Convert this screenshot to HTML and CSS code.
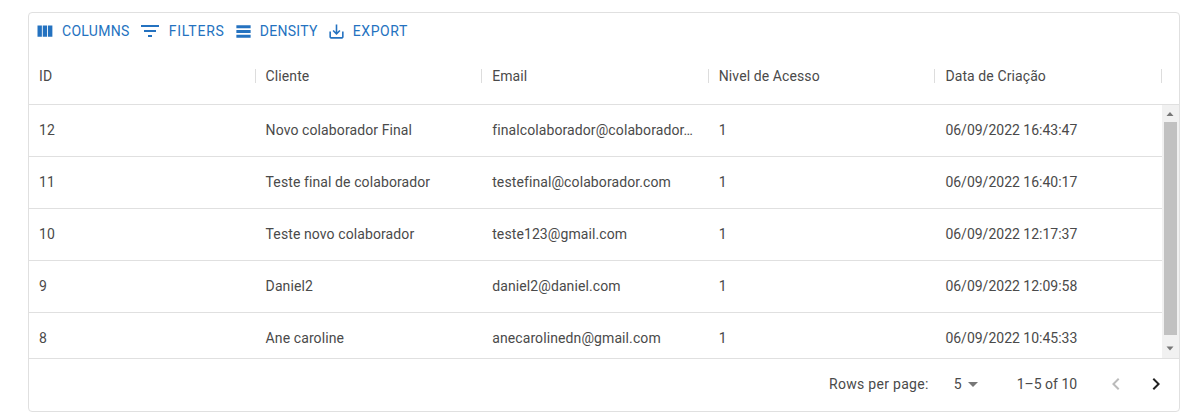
FILE: index.html
```html
<!DOCTYPE html>
<html lang="en">
<head>
    <meta charset="UTF-8">
    <title>Colaboradores</title>
    <link rel="stylesheet" href="styles.css">
</head>
<body>

    <div class="grid">
        <div class="toolbar">
            <button class="tool-btn tool-columns">
                <svg class="tool-icon" viewBox="0 0 24 24"><path d="M10 18h5V5h-5v13zm-6 0h5V5H4v13zM16 5v13h5V5h-5z"/></svg>
                Columns
            </button>
            <button class="tool-btn tool-filters">
                <svg class="tool-icon" viewBox="0 0 24 24"><path d="M10 18h4v-2h-4v2zM3 6v2h18V6H3zm3 7h12v-2H6v2z"/></svg>
                Filters
            </button>
            <button class="tool-btn tool-density">
                <svg class="tool-icon" viewBox="0 0 24 24"><path d="M21 8H3V4h18v4zm0 2H3v4h18v-4zm0 6H3v4h18v-4z"/></svg>
                Density
            </button>
            <button class="tool-btn tool-export">
                <svg class="tool-icon" viewBox="0 0 24 24"><path d="M19 12v7H5v-7H3v7c0 1.1.9 2 2 2h14c1.1 0 2-.9 2-2v-7h-2zm-6 .67l2.59-2.58L17 11.5l-5 5-5-5 1.41-1.41L11 12.67V3h2v9.67z"/></svg>
                Export
            </button>
        </div>

        <div class="head row-cols">
            <div class="head-cell">ID</div>
            <div class="head-cell">Cliente</div>
            <div class="head-cell">Email</div>
            <div class="head-cell">Nivel de Acesso</div>
            <div class="head-cell">Data de Criação</div>
        </div>

        <div class="body-wrap">
            <div class="rows">
                <div class="row row-cols">
                    <div class="cell">12</div>
                    <div class="cell">Novo colaborador Final</div>
                    <div class="cell">finalcolaborador@colaborador…</div>
                    <div class="cell">1</div>
                    <div class="cell cell-date">06/09/2022 16:43:47</div>
                </div>
                <div class="row row-cols">
                    <div class="cell">11</div>
                    <div class="cell">Teste final de colaborador</div>
                    <div class="cell">testefinal@colaborador.com</div>
                    <div class="cell">1</div>
                    <div class="cell cell-date">06/09/2022 16:40:17</div>
                </div>
                <div class="row row-cols">
                    <div class="cell">10</div>
                    <div class="cell">Teste novo colaborador</div>
                    <div class="cell">teste123@gmail.com</div>
                    <div class="cell">1</div>
                    <div class="cell cell-date">06/09/2022 12:17:37</div>
                </div>
                <div class="row row-cols">
                    <div class="cell">9</div>
                    <div class="cell">Daniel2</div>
                    <div class="cell">daniel2@daniel.com</div>
                    <div class="cell">1</div>
                    <div class="cell cell-date">06/09/2022 12:09:58</div>
                </div>
                <div class="row row-cols">
                    <div class="cell">8</div>
                    <div class="cell">Ane caroline</div>
                    <div class="cell">anecarolinedn@gmail.com</div>
                    <div class="cell">1</div>
                    <div class="cell cell-date">06/09/2022 10:45:33</div>
                </div>
            </div>
            <div class="scrollbar">
                <svg class="scroll-arrow" viewBox="0 0 17 17"><path d="M8 7l3.5 4h-7z"/></svg>
                <div class="scroll-thumb"></div>
                <svg class="scroll-arrow" viewBox="0 0 17 17"><path d="M8 9.5l-3.5-4h7z"/></svg>
            </div>
        </div>

        <div class="footer">
            <span class="rows-label">Rows per page:</span>
            <span class="rows-select">5
                <svg class="select-icon" viewBox="0 0 24 24"><path d="M7 10l5 5 5-5z"/></svg>
            </span>
            <span class="page-range">1–5 of 10</span>
            <svg class="page-icon page-prev" viewBox="0 0 24 24"><path d="M15.41 7.41L14 6l-6 6 6 6 1.41-1.41L10.83 12z"/></svg>
            <svg class="page-icon page-next" viewBox="0 0 24 24"><path d="M10 6L8.59 7.41 13.17 12l-4.58 4.59L10 18l6-6z"/></svg>
        </div>
    </div>

</body>
</html>
```

FILE: styles.css
```css
* {
    margin: 0;
    padding: 0;
    box-sizing: border-box;
}

body {
    background-color: #fff;
    font-family: Roboto, "Liberation Sans", sans-serif;
    font-size: 14px;
    color: #4a4a4a;
    letter-spacing: 0.1px;
    padding: 12px 23px 7px 28px;
}

.grid {
    height: 400px;
    border: 1px solid #e0e0e0;
    border-radius: 4px;
    display: flex;
    flex-direction: column;
}

.toolbar {
    height: 38px;
    padding: 0 0 2px 5px;
    display: flex;
    align-items: center;
}

.tool-btn {
    display: flex;
    align-items: center;
    background: none;
    border: none;
    color: #2472c0;
    font-family: inherit;
    font-size: 14px;
    letter-spacing: 0.3px;
    text-transform: uppercase;
    height: 30px;
}

.tool-icon {
    fill: #2472c0;
    margin-right: 7px;
}

.tool-columns .tool-icon {
    width: 21px;
    height: 21px;
}

.tool-filters {
    margin-left: 8px;
    letter-spacing: 0.8px;
}

.tool-filters .tool-icon {
    width: 24px;
    height: 24px;
}

.tool-density {
    margin-left: 9px;
}

.tool-density .tool-icon {
    width: 19px;
    height: 19px;
}

.tool-export {
    margin-left: 9px;
    letter-spacing: 0.6px;
}

.tool-export .tool-icon {
    width: 19px;
    height: 19px;
}

.row-cols {
    display: grid;
    grid-template-columns: repeat(5, 226.6px);
}

.head {
    height: 54px;
    padding-bottom: 3px;
    border-bottom: 1px solid #e0e0e0;
}

.head-cell {
    display: flex;
    align-items: center;
    padding: 0 10px;
    position: relative;
}

.head-cell::after {
    content: "";
    position: absolute;
    right: 0;
    top: 18px;
    width: 1px;
    height: 14px;
    background-color: #ddd;
}

.body-wrap {
    height: 254px;
    display: flex;
    border-bottom: 1px solid #e0e0e0;
}

.rows {
    flex: 1;
    overflow: hidden;
}

.row {
    height: 52px;
    border-bottom: 1px solid #e0e0e0;
}

.cell {
    padding: 0 10px;
    line-height: 50px;
    white-space: nowrap;
}

.cell-date {
    letter-spacing: 0;
}

.scrollbar {
    width: 17px;
    background-color: #f1f1f1;
    display: flex;
    flex-direction: column;
    flex-shrink: 0;
}

.scroll-arrow {
    width: 17px;
    height: 17px;
    fill: #777;
    flex-shrink: 0;
}

.scroll-thumb {
    flex: 1;
    margin: 0 2px 6px 2px;
    background-color: #c1c1c1;
}

.footer {
    flex: 1;
    display: flex;
    align-items: center;
    padding-bottom: 2px;
}

.rows-label {
    margin-left: 800px;
    letter-spacing: 0.3px;
}

.rows-select {
    display: flex;
    align-items: center;
    margin-left: 25px;
}

.select-icon {
    width: 24px;
    height: 24px;
    fill: #777;
    margin-left: -1px;
}

.page-range {
    margin-left: 32px;
    letter-spacing: 0;
}

.page-icon {
    width: 24px;
    height: 24px;
}

.page-prev {
    fill: #bbb;
    margin-left: 27px;
}

.page-next {
    fill: #222;
    margin-left: 16px;
}
```
